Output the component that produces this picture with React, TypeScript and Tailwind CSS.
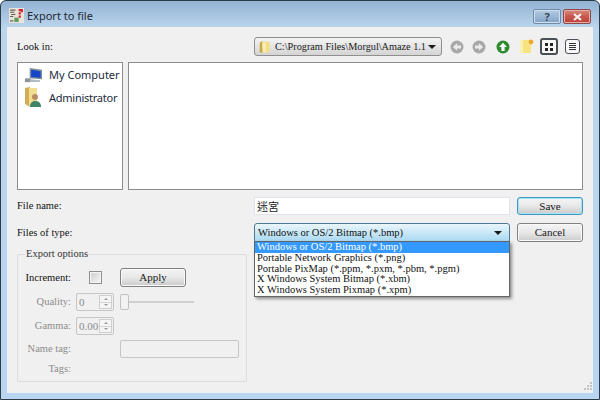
const serif = "font-['Liberation_Serif',serif]"

function ActionButton({ label, focused }: { label: string; focused?: boolean }) {
  return (
    <button
      className={`h-full w-[66px] rounded-[3px] border bg-gradient-to-b from-[#f4f4f4] via-[#e8e8e8] to-[#cbcbcb] text-[11px] leading-none text-[#1a1a1a] ${serif} ${
        focused ? "border-[#3c9ac4] shadow-[inset_0_0_0_1px_#a6e3f5]" : "border-[#808080] shadow-[inset_0_0_0_1px_#fafafa]"
      }`}
    >
      {label}
    </button>
  )
}

function Caret() {
  return <span className="h-0 w-0 shrink-0 border-x-[4px] border-t-[4px] border-x-transparent border-t-[#1a1a1a]" />
}

function FolderIcon({ className }: { className: string }) {
  return (
    <svg viewBox="0 0 16 18" className={className}>
      <path d="M5 1 L1 3 V16 L5 17 Z" fill="#c9a94a" />
      <path d="M4 2 H14 V16 H5 Z" fill="#f5dd86" />
      <path d="M5 3 H9 V16 H5 Z" fill="#fbeeb5" />
    </svg>
  )
}

function NavCircle({ color, up, back }: { color: string; up?: boolean; back?: boolean }) {
  return (
    <svg viewBox="0 0 14 14" className="h-[14px] w-[14px] shrink-0">
      <circle cx="7" cy="7" r="6.5" fill={color} />
      {up ? (
        <path d="M7 2.8 L11 7 H8.6 V11 H5.4 V7 H3 Z" fill="#ffffff" />
      ) : (
        <path d={back ? "M3 7 L7 3.2 V5.6 H11 V8.4 H7 V10.8 Z" : "M11 7 L7 3.2 V5.6 H3 V8.4 H7 V10.8 Z"} fill="#ececec" />
      )}
    </svg>
  )
}

function Spin({ value }: { value: string }) {
  return (
    <div className="flex h-[18px] w-[38px] items-center justify-between rounded-[2px] border border-[#c6c6c6] bg-[#f0f0f0] pl-[2px] pr-px text-[11px] text-[#8b8b8b]">
      <span>{value}</span>
      <span className="flex h-[14px] w-[13px] flex-col border border-[#cfcfcf] bg-[#f5f5f5]">
        <span className="flex flex-1 items-center justify-center border-b border-[#d4d4d4]">
          <span className="h-0 w-0 border-x-[2px] border-b-[2px] border-x-transparent border-b-[#9a9a9a]" />
        </span>
        <span className="flex flex-1 items-center justify-center">
          <span className="h-0 w-0 border-x-[2px] border-t-[2px] border-x-transparent border-t-[#9a9a9a]" />
        </span>
      </span>
    </div>
  )
}

const fileTypes = [
  "Windows or OS/2 Bitmap (*.bmp)",
  "Portable Network Graphics (*.png)",
  "Portable PixMap (*.ppm, *.pxm, *.pbm, *.pgm)",
  "X Windows System Bitmap (*.xbm)",
  "X Windows System Pixmap (*.xpm)",
]

export default function App() {
  return (
    <div className="h-[401px] w-[600px] overflow-hidden bg-white">
      <div className="flex h-[400px] w-[600px] flex-col rounded-t-[6px] border border-[#2c3d49] bg-[#bcd4ec] px-[6px] pb-[6px] [background-image:linear-gradient(to_bottom,#93b3d3_0px,#bcd5ec_27px,#b9d5f1_100%)]">
        {/* title bar */}
        <div className="flex h-[26px] shrink-0 items-start">
          <svg viewBox="0 0 14 14" className="ml-[2px] mt-[7px] h-[15px] w-[15px]">
            <rect width="14" height="14" fill="#e8e4dc" />
            <path d="M1 2 H6 M1 4 H5 M2 6 H6 M1 8 H4 M1 12 H4" stroke="#6b5a50" strokeWidth="1" />
            <path d="M9 1 H13 V4 H11 V6 H9 V4 H11 V3 H9 Z M9 7 H11 V9 H9 Z" fill="#d8202c" />
            <rect x="5" y="9" width="4" height="4" fill="#5f9a58" />
          </svg>
          <span className="ml-[3px] mt-[7px] font-['Noto_Sans',sans-serif] text-[11px] leading-[16px] text-[#1d2a36]">Export to file</span>
          <div className="ml-auto mr-[2px] mt-[8px] flex gap-[2px]">
            <span className="flex h-[15px] w-[28px] items-center justify-center rounded-[2px] border border-[#6d8aa8] bg-gradient-to-b from-[#b4cbe2] to-[#82a3c5] font-['Noto_Sans',sans-serif] text-[11px] font-bold leading-none text-[#39495a] shadow-[inset_0_0_0_1px_#d2e0ee]">?</span>
            <span className="flex h-[15px] w-[28px] items-center justify-center rounded-[2px] border border-[#8d4a48] bg-gradient-to-b from-[#d98a80] via-[#c9564c] to-[#c03f38] shadow-[inset_0_0_0_1px_#e3aca6]">
              <svg viewBox="0 0 10 8" className="h-[8px] w-[11px]"><path d="M1.5 1 L8.5 7 M8.5 1 L1.5 7" stroke="#f3f3f3" strokeWidth="2.2" /></svg>
            </span>
          </div>
        </div>

        {/* dialog body */}
        <div className={`relative flex min-h-0 flex-1 flex-col bg-[#f0f0f0] px-[10px] pt-[10px] text-[10.5px] leading-[14px] text-[#111] ${serif}`}>
          {/* look in */}
          <div className="flex h-[19px] shrink-0 items-center">
            <span className="w-[237px]">Look in:</span>
            <div className="flex h-[19px] w-[188px] items-center rounded-[3px] border border-[#8f8f8f] bg-gradient-to-b from-[#f4f4f4] to-[#d4d4d4] pl-[4px] pr-[5px]">
              <FolderIcon className="h-[16px] w-[12px] shrink-0" />
              <span className="ml-[4px] flex-1 whitespace-nowrap text-[10.25px] text-[#222]">C:\Program Files\Morgul\Amaze 1.1</span>
              <Caret />
            </div>
            <div className="ml-[8px] flex items-center">
              <NavCircle color="#a9a9a9" back />
              <span className="ml-[8px]"><NavCircle color="#a8a8a8" /></span>
              <span className="ml-[10px]"><NavCircle color="#2d8a2d" up /></span>
              <svg viewBox="0 0 15 15" className="ml-[9px] h-[15px] w-[15px]">
                <path d="M1 1 H12 V14 H1 Z" fill="#f6e27f" />
                <path d="M1 1 H4 V14 H1 Z" fill="#fbf0b3" />
                <circle cx="12" cy="3" r="2.4" fill="#eea933" />
              </svg>
              <span className="ml-[6px] flex h-[17px] w-[18px] items-center justify-center rounded-[3px] border-2 border-[#4a4f55] bg-[#f7f7f7]">
                <span className="grid grid-cols-2 gap-[2px]">
                  <span className="h-[3px] w-[3px] bg-[#222]" />
                  <span className="h-[3px] w-[3px] bg-[#222]" />
                  <span className="h-[3px] w-[3px] bg-[#222]" />
                  <span className="h-[3px] w-[3px] bg-[#222]" />
                </span>
              </span>
              <span className="ml-[7px] flex h-[15px] w-[15px] flex-col items-center justify-center gap-px rounded-[3px] border border-[#4a4f55] bg-[#f7f7f7]">
                <span className="h-px w-[7px] bg-[#333]" />
                <span className="h-px w-[7px] bg-[#333]" />
                <span className="h-px w-[7px] bg-[#333]" />
                <span className="h-px w-[7px] bg-[#333]" />
              </span>
            </div>
          </div>

          {/* places + file list */}
          <div className="mt-[6px] flex h-[128px] shrink-0 gap-[5px]">
            <div className="w-[106px] border border-[#8c8c8c] bg-white pt-px font-['Noto_Sans',sans-serif] text-[11px] text-[#1c2b3c]">
              <div className="flex h-[22px] items-center pl-[6px]">
                <svg viewBox="0 0 20 18" className="h-[17px] w-[19px] shrink-0">
                  <path d="M6 1 L19 3 V13 L6 12 Z" fill="#7d8c9c" />
                  <path d="M7.5 3 L17.5 4.5 V11.5 L7.5 10.5 Z" fill="#1546c8" />
                  <path d="M1 12 H7 V16 H1 Z" fill="#8b949c" />
                  <path d="M7 13 L17 14 V16 L7 16 Z" fill="#b3bac1" />
                </svg>
                <span className="ml-[6px] whitespace-nowrap">My Computer</span>
              </div>
              <div className="flex h-[23px] items-center pl-[6px]">
                <svg viewBox="0 0 18 21" className="h-[21px] w-[18px] shrink-0">
                  <path d="M1 1 L6 0 V20 L1 17 Z" fill="#d1ae55" />
                  <path d="M5 1 H13 V17 L5 20 Z" fill="#f3dd90" />
                  <circle cx="11" cy="10" r="3" fill="#b98c63" />
                  <path d="M6 20 C6 15 9 14 11 14 C14 14 17 15 17 20 Z" fill="#3f8368" />
                </svg>
                <span className="ml-[7px] whitespace-nowrap tracking-[-0.25px]">Administrator</span>
              </div>
            </div>
            <div className="w-[455px] border border-[#8c8c8c] bg-white" />
          </div>

          {/* file name */}
          <div className="mt-[7px] flex h-[18px] shrink-0 items-center">
            <span className="w-[237px]">File name:</span>
            <div className="flex h-[18px] w-[256px] items-center border border-[#e2e3ea] bg-white pl-[2px] font-['Noto_Sans_CJK_TC',sans-serif] text-[11px] text-[#222]">迷宮</div>
            <div className="ml-[7px] h-[18px]"><ActionButton label="Save" focused /></div>
          </div>

          {/* files of type */}
          <div className="mt-[8px] flex h-[19px] shrink-0 items-center">
            <span className="w-[237px]">Files of type:</span>
            <div className="flex h-[19px] w-[256px] items-center rounded-t-[3px] border border-[#4d7a99] bg-gradient-to-b from-[#eaf6fc] to-[#a9d9f2] pl-[3px] pr-[7px] text-[#111]">
              <span className="flex-1 whitespace-nowrap">{fileTypes[0]}</span>
              <Caret />
            </div>
            <div className="ml-[7px] h-[19px]"><ActionButton label="Cancel" /></div>
          </div>

          {/* export options */}
          <div className="relative mt-[12px] h-[128px] w-[230px] shrink-0 rounded-[2px] border border-[#dcdcdc] pl-[6px] pt-[13px]">
            <span className="absolute -top-[8px] left-[7px] bg-[#f0f0f0] px-px text-[#333]">Export options</span>
            <div className="flex h-[19px] items-center">
              <span className="w-[47px] whitespace-nowrap text-right">Increment:</span>
              <span className="ml-[18px] h-[13px] w-[13px] border border-[#8e8f8f] bg-gradient-to-br from-[#cfcfcf] to-[#f5f5f5] shadow-[inset_0_0_0_1px_#f4f4f4]" />
              <span className="ml-[18px] h-[19px]"><ActionButton label="Apply" /></span>
            </div>
            <div className="mt-[6px] flex h-[18px] items-center text-[#8c8c8c]">
              <span className="w-[47px] text-right">Quality:</span>
              <span className="ml-[5px]"><Spin value="0" /></span>
              <div className="relative ml-[6px] flex h-[16px] w-[74px] items-center">
                <span className="h-[2px] w-full bg-[#d0d0d0]" />
                <span className="absolute left-0 top-0 h-[16px] w-[9px] rounded-[2px] border border-[#c0c0c0] bg-[#f2f2f2]" />
              </div>
            </div>
            <div className="mt-[6px] flex h-[18px] items-center text-[#8c8c8c]">
              <span className="w-[47px] text-right">Gamma:</span>
              <span className="ml-[5px]"><Spin value="0.00" /></span>
            </div>
            <div className="mt-[5px] flex h-[18px] items-center text-[#8c8c8c]">
              <span className="w-[47px] whitespace-nowrap text-right">Name tag:</span>
              <span className="ml-[49px] h-[18px] w-[119px] rounded-[2px] border border-[#c6c6c6] bg-[#f0f0f0]" />
            </div>
            <div className="mt-[4px] flex h-[14px] items-center text-[#8c8c8c]">
              <span className="w-[47px] text-right">Tags:</span>
            </div>
          </div>

          {/* open dropdown list */}
          <div className="absolute left-[247px] top-[214px] z-10 w-[256px] border border-[#646464] bg-white shadow-[2px_2px_3px_rgba(0,0,0,0.4)]">
            {fileTypes.map((t, i) => (
              <div key={t} className={`h-[10.8px] whitespace-nowrap pl-[2px] text-[10.5px] leading-[10.8px] ${i === 0 ? "bg-[#3399ff] text-white" : "text-[#111]"}`}>{t}</div>
            ))}
          </div>

          {/* resize grip */}
          <svg viewBox="0 0 9 9" className="absolute bottom-[2px] right-0 h-[9px] w-[9px]">
            <path d="M6 0 h2 v2 h-2 Z M3 3 h2 v2 h-2 Z M6 3 h2 v2 h-2 Z M0 6 h2 v2 h-2 Z M3 6 h2 v2 h-2 Z M6 6 h2 v2 h-2 Z" fill="#c4c4c4" />
          </svg>
        </div>
      </div>
    </div>
  )
}
